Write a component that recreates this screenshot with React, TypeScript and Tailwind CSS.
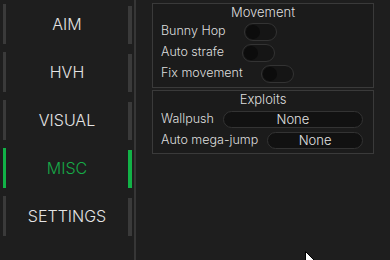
import { useState } from 'react'

const tabs = ['AIM', 'HVH', 'VISUAL', 'MISC', 'SETTINGS']

function Toggle() {
  return (
    <div className="w-[33px] h-[18px] rounded-full border border-[#333333] bg-[#151515] flex items-center px-[1px]">
      <div className="w-[14px] h-[14px] rounded-full bg-[#0c0c0c]" />
    </div>
  )
}

function Select({ value }: { value: string }) {
  return (
    <div className="flex-1 h-[17px] rounded-full border border-[#333333] bg-[#111111] flex items-center justify-center text-[13px] text-[#e2e2e2]">
      {value}
    </div>
  )
}

export default function App() {
  const [active] = useState(3)

  return (
    <div
      className="relative w-[390px] h-[260px] overflow-hidden bg-[#1e1e1e] flex text-[#dedede]"
      style={{ fontFamily: 'Inter, Lato, sans-serif' }}
    >
      {/* Sidebar */}
      <div className="w-[136px] h-full border-r-2 border-[#363636] flex flex-col">
        {tabs.map((t, i) => {
          const on = i === active
          return (
            <div key={t} className="h-[48px] flex items-stretch py-[4px]">
              <div className={`ml-[3px] w-[3px] ${on ? 'bg-[#12b247]' : 'bg-[#3a3a3a]'}`} />
              <div
                className={`flex-1 flex items-center justify-center text-[16px] font-light ${
                  on ? 'text-[#16aa48]' : 'text-[#e4e4e4]'
                }`}
              >
                {t}
              </div>
              <div className={`mr-[2px] mt-[2px] w-[4px] ${on ? 'bg-[#12b247]' : 'bg-[#3a3a3a]'}`} />
            </div>
          )
        })}
      </div>

      {/* Content */}
      <div className="flex-1 pl-[16px] pt-[3px] flex flex-col gap-[2px] font-light">
        <div className="w-[222px] border border-[#3a3a3a] bg-[#1b1b1b] pb-[3px] text-[12.5px]">
          <div className="h-[17px] flex items-center justify-center text-[13px]">Movement</div>
          {['Bunny Hop', 'Auto strafe', 'Fix movement'].map((l) => (
            <div key={l} className="h-[21px] flex items-center gap-[18px] pl-[8px]">
              <span>{l}</span>
              <Toggle />
            </div>
          ))}
        </div>

        <div className="w-[222px] border border-[#3a3a3a] bg-[#1b1b1b] pb-[2px] text-[12.5px]">
          <div className="h-[18px] flex items-center justify-center text-[13px]">Exploits</div>
          {['Wallpush', 'Auto mega-jump'].map((l) => (
            <div key={l} className="h-[21px] flex items-center gap-[9px] pl-[8px] pr-[10px]">
              <span>{l}</span>
              <Select value="None" />
            </div>
          ))}
        </div>
      </div>

      {/* mouse cursor */}
      <svg className="absolute left-[305px] top-[251px]" width="13" height="20" viewBox="0 0 13 20">
        <path d="M0.5 0.5 L0.5 16 L4 12.5 L6.5 18.5 L9 17.5 L6.5 11.5 L11.5 11.5 Z" fill="#fff" stroke="#000" strokeWidth="1" />
      </svg>
    </div>
  )
}
